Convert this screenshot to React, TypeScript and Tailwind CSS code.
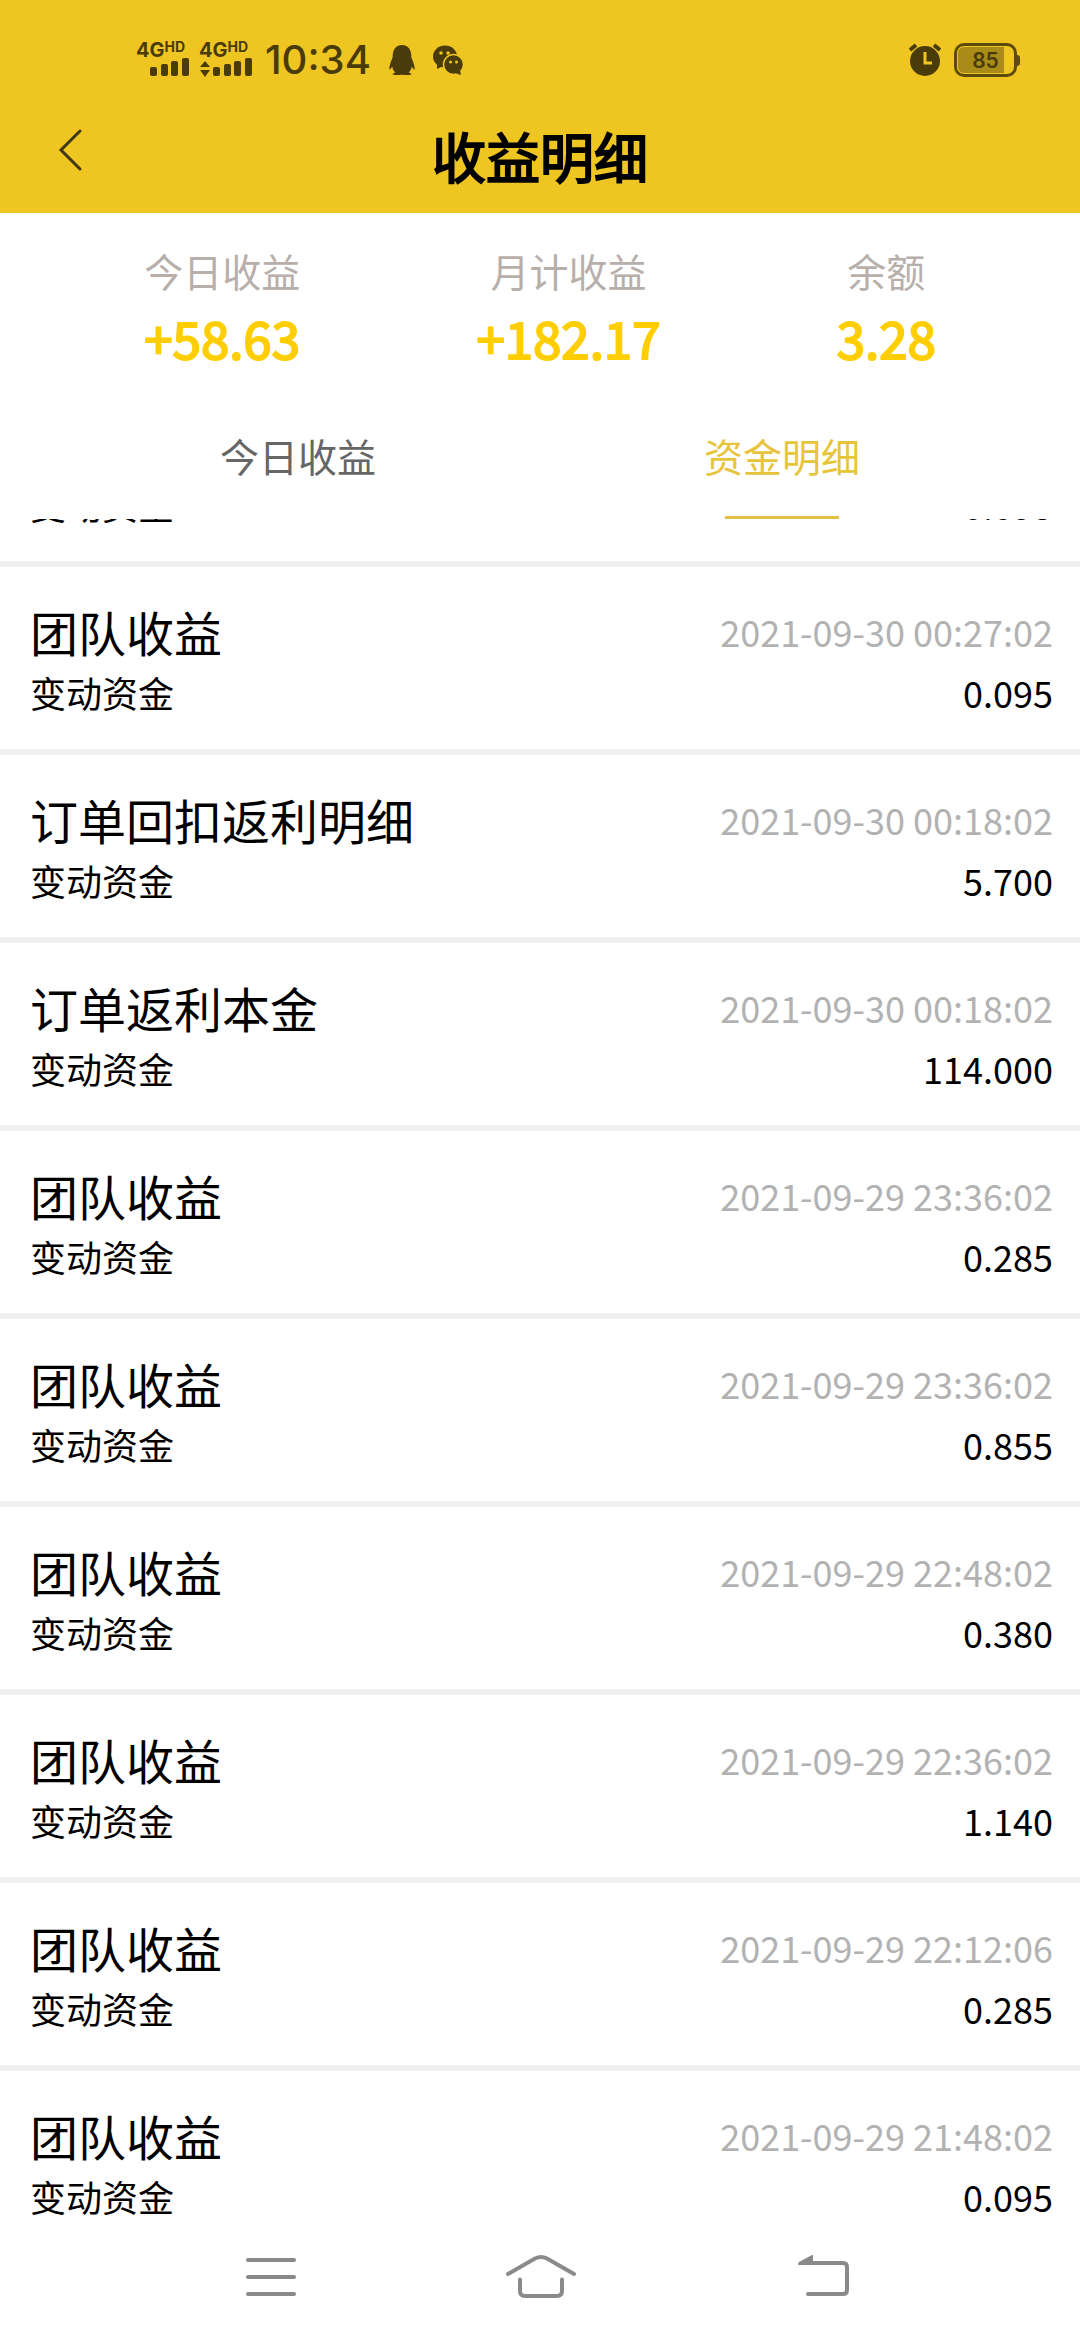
import { FaQq } from "react-icons/fa";

const stats = [
  { label: "今日收益", value: "+58.63" },
  { label: "月计收益", value: "+182.17" },
  { label: "余额", value: "3.28" },
];

const records = [
  { title: "团队收益", time: "2021-09-30 00:36:02", amount: "0.095" },
  { title: "团队收益", time: "2021-09-30 00:27:02", amount: "0.095" },
  { title: "订单回扣返利明细", time: "2021-09-30 00:18:02", amount: "5.700" },
  { title: "订单返利本金", time: "2021-09-30 00:18:02", amount: "114.000" },
  { title: "团队收益", time: "2021-09-29 23:36:02", amount: "0.285" },
  { title: "团队收益", time: "2021-09-29 23:36:02", amount: "0.855" },
  { title: "团队收益", time: "2021-09-29 22:48:02", amount: "0.380" },
  { title: "团队收益", time: "2021-09-29 22:36:02", amount: "1.140" },
  { title: "团队收益", time: "2021-09-29 22:12:06", amount: "0.285" },
  { title: "团队收益", time: "2021-09-29 21:48:02", amount: "0.095" },
];

function Signal({ data = false }: { data?: boolean }) {
  return (
    <div className="flex w-[54px] flex-col">
      <div className="flex items-start font-['Inter',sans-serif] font-bold leading-4">
        <span className="text-[20px]">4G</span>
        <span className="text-[14px] leading-[10px]">HD</span>
      </div>
      <svg width="54" height="20" viewBox="0 0 54 20" fill="currentColor">
        {data && <path d="M1 9 6 3l5 6zM1 12h10l-5 7z" />}
        <rect x="14" y="9" width="7" height="9" rx="2" />
        <rect x="25" y="6" width="7" height="12" rx="2" />
        <rect x="35" y="3" width="7" height="15" rx="2" />
        <rect x="46" y="0" width="7" height="18" rx="2" />
      </svg>
    </div>
  );
}

function WeChatIcon() {
  return (
    <svg width="31" height="31" viewBox="0 0 31 31" fill="currentColor" className="ml-4">
      <ellipse cx="12" cy="11.500" rx="12" ry="11" />
      <path d="M4 18v6l6-3z" />
      <g fill="#efc522">
        <circle cx="8" cy="8" r="1.800" />
        <circle cx="15" cy="8" r="1.800" />
      </g>
      <circle cx="20.500" cy="19.500" r="10" stroke="#efc522" strokeWidth="1.500" />
      <path d="m22 28 6 2-1-5z" />
      <g fill="#efc522">
        <circle cx="17.500" cy="17" r="1.500" />
        <circle cx="23.500" cy="17" r="1.500" />
      </g>
    </svg>
  );
}

function AlarmIcon() {
  return (
    <svg width="34" height="34" viewBox="0 0 34 34" fill="none">
      <circle cx="17" cy="18" r="15" fill="currentColor" />
      <path d="M2 7l6-5M32 7l-6-5" stroke="currentColor" strokeWidth="4" />
      <path d="M17 9v11h7" stroke="#efc522" strokeWidth="3" />
    </svg>
  );
}

function Battery({ level }: { level: number }) {
  return (
    <div className="flex items-center">
      <div className="relative flex h-[34px] w-[63px] items-center justify-center rounded-[10px] border-[3px] border-[#5c4b0d]">
        <div className="absolute inset-y-[1px] left-[1px] w-[46px] rounded-l-[6px] bg-[#a88b18]" />
        <span className="relative font-['Inter',sans-serif] text-[21px] font-semibold leading-none">{level}</span>
      </div>
      <div className="h-[11px] w-[3px] rounded-r-sm bg-[#5c4b0d]" />
    </div>
  );
}

function StatusBar() {
  return (
    <div className="flex h-[108px] items-center justify-between pl-[136px] pr-[60px] pt-3 text-[#4a3c0a]">
      <div className="flex items-center">
        <Signal />
        <div className="w-[9px]" />
        <Signal data />
        <span className="ml-3 font-['Inter',sans-serif] text-[40px] font-medium leading-none">10:34</span>
        <FaQq className="ml-4 size-[30px]" />
        <WeChatIcon />
      </div>
      <div className="flex items-center gap-3">
        <AlarmIcon />
        <Battery level={85} />
      </div>
    </div>
  );
}

function NavBar() {
  return (
    <nav className="grid h-[120px] shrink-0 grid-cols-3 justify-items-center bg-white px-[12.5%] pb-1.5 text-[#8a8a8a]">
      <button type="button" aria-label="Menu">
        <svg width="80" height="46" viewBox="0 0 80 46" fill="none" stroke="currentColor" strokeWidth="4" strokeLinecap="round">
          <path d="M18 6h46M18 23h46M18 40h46" />
        </svg>
      </button>
      <button type="button" aria-label="Home">
        <svg width="80" height="46" viewBox="0 0 80 46" fill="none" stroke="currentColor" strokeWidth="4" strokeLinecap="round">
          <path d="M8 20 35 4.500q6-3 12 0L74 20M20 25.500V37q0 5 5 5h32q5 0 5-5V25.500" />
        </svg>
      </button>
      <button type="button" aria-label="Back">
        <svg width="80" height="46" viewBox="0 0 80 46" fill="none" stroke="currentColor" strokeWidth="4" strokeLinecap="round">
          <path d="M38 40h35q4 0 4-4V13q0-4-4-4H40" />
          <path d="M28 10q0-1 1-2L42 1h1v10H29q-1 0-1-1z" fill="currentColor" stroke="none" />
        </svg>
      </button>
    </nav>
  );
}

export default function App() {
  return (
    <div className="flex h-screen flex-col overflow-hidden bg-white font-['Noto_Sans_CJK_SC',sans-serif] text-black">
      <header className="shrink-0 bg-[#efc522]">
        <StatusBar />
        <div className="grid h-[105px] grid-cols-3 items-start">
          <button type="button" aria-label="返回" className="w-fit pl-14 pt-[19px]">
            <svg width="30" height="46" viewBox="0 0 30 46" fill="none" stroke="#403714" strokeWidth="3" strokeLinecap="round">
              <path d="M24 4 5 23l19 19" />
            </svg>
          </button>
          <h1 className="pt-5 text-center text-[54px] leading-[56px] [-webkit-text-stroke:2px]">收益明细</h1>
        </div>
      </header>

      <section className="flex shrink-0 justify-around px-14 pt-7">
        {stats.map((s) => (
          <div key={s.label} className="flex flex-col items-center">
            <span className="text-[39px] leading-[58px] text-[#b8afab]">{s.label}</span>
            <span className="text-[51px] leading-[76px] text-[#ffce00] [-webkit-text-stroke:2px]">{s.value}</span>
          </div>
        ))}
      </section>

      <div role="tablist" className="flex h-36 shrink-0 px-14 text-[39px]">
        <button type="button" role="tab" aria-selected="false" className="flex-1 pt-4 text-[#666]">
          今日收益
        </button>
        <button type="button" role="tab" aria-selected="true" className="relative flex-1 pt-4 text-[#e8c43c]">
          资金明细
          <span className="absolute bottom-0 left-1/2 h-[3px] w-[114px] -translate-x-1/2 bg-[#e3c145]" />
        </button>
      </div>

      <main className="min-h-0 flex-1 overflow-hidden">
        {/* list is scrolled part way through its first row */}
        <ul className="-mt-[140px]">
          {records.map((r, i) => (
            <li key={i} className="flex h-[188px] justify-between border-b-[6px] border-[#f0f0f0] pl-[30px] pr-[27px] pt-8">
              <div className="flex flex-col">
                <span className="text-[48px] leading-[64px]">{r.title}</span>
                <span className="text-[36px] leading-[58px]">变动资金</span>
              </div>
              <div className="flex flex-col text-right text-[36px]">
                <time className="leading-[64px] text-[#b2b2b2]">{r.time}</time>
                <span className="leading-[58px]">{r.amount}</span>
              </div>
            </li>
          ))}
        </ul>
      </main>

      <NavBar />
    </div>
  );
}
